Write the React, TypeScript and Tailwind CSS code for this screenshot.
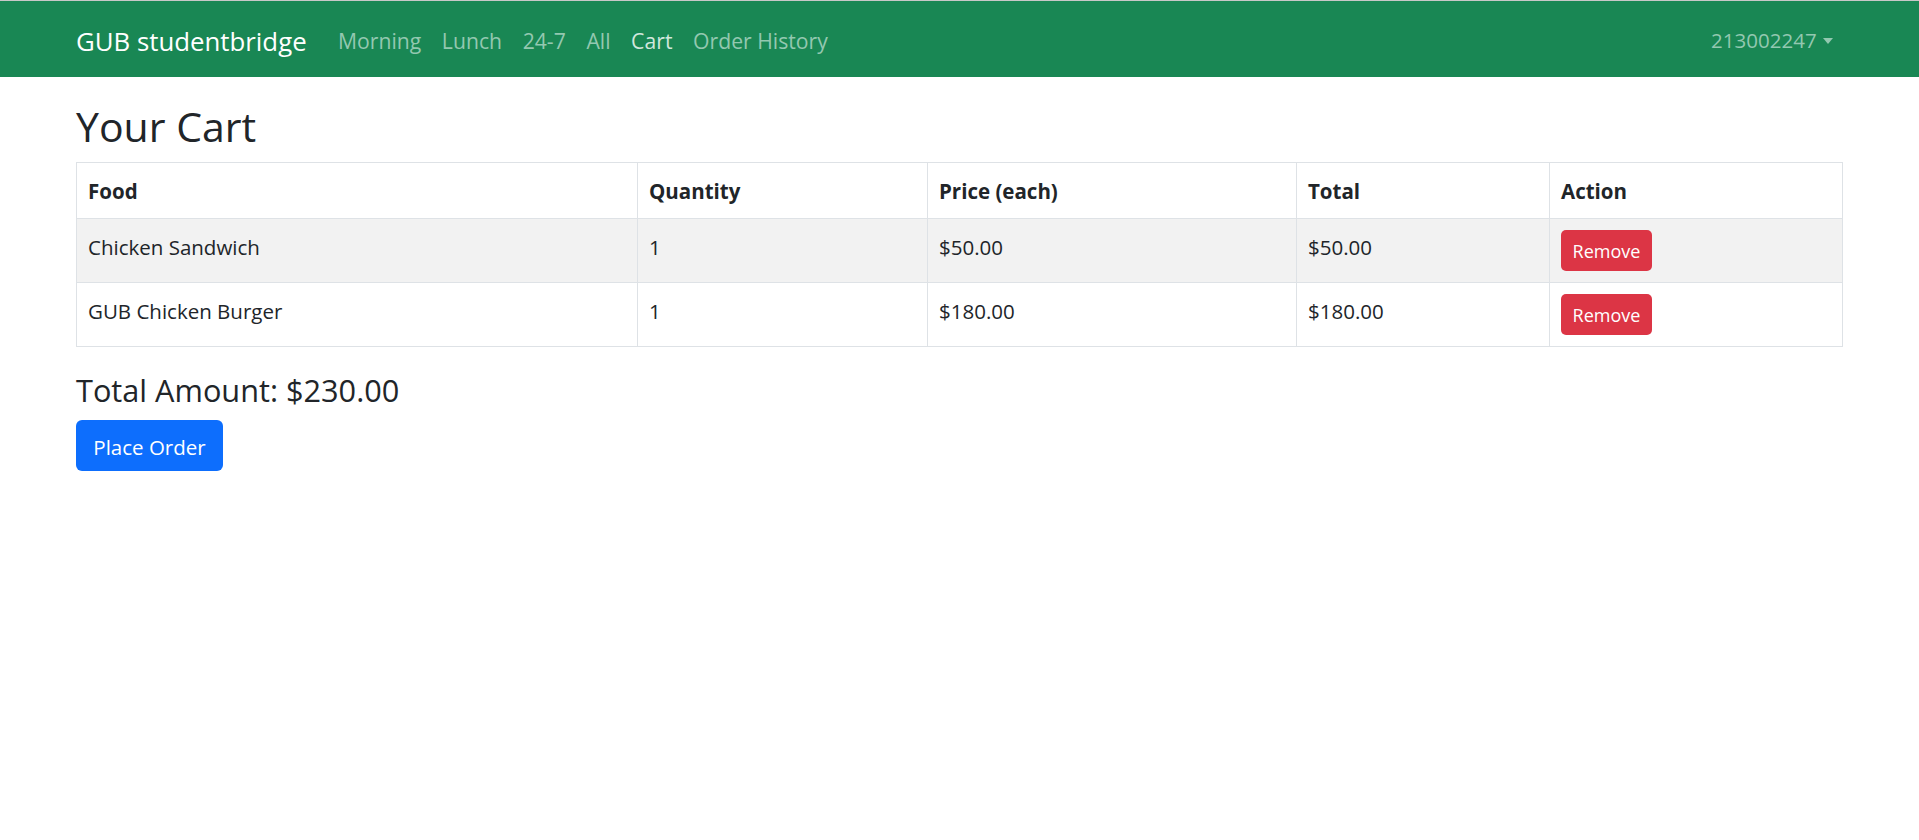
import React from "react";

const rows = [
  { food: "Chicken Sandwich", qty: 1, price: "$50.00", total: "$50.00" },
  { food: "GUB Chicken Burger", qty: 1, price: "$180.00", total: "$180.00" },
];

const links = ["Morning", "Lunch", "24-7", "All", "Cart", "Order History"];

export default function App() {
  return (
    <div
      className="min-h-screen bg-white text-[#212529]"
      style={{ fontFamily: '"Open Sans", "Noto Sans", sans-serif' }}
    >
      <nav className="border-t border-[#c8c8c8] bg-[#198754]">
        <div className="flex h-[76px] items-center px-[76px] pt-[3px]">
          <span className="mr-[21px] text-[25.8px] leading-[36px] text-white">GUB studentbridge</span>
          <ul className="flex items-center">
            {links.map((l) => (
              <li
                key={l}
                className={
                  "px-[10.3px] text-[21.2px] leading-[31px] " +
                  (l === "Cart" ? "text-[#d1e7dd]" : "text-[#93c8b0]")
                }
              >
                {l}
              </li>
            ))}
          </ul>
          <div className="ml-auto flex items-center px-[10.4px] text-[20.5px] leading-[31px] text-[#93c8b0]">
            <span>213002247</span>
            <span className="ml-[6px] inline-block h-0 w-0 border-x-[5.5px] border-t-[6px] border-x-transparent border-t-[#93c8b0]" />
          </div>
        </div>
      </nav>

      <main className="px-[76px]">
        <h2 className="mt-[25px] mb-[11px] text-[41px] leading-[49px] font-normal">Your Cart</h2>

        <table className="w-full border-collapse border border-[#dee2e6] text-[20.5px]">
          <thead>
            <tr>
              <th className="w-[561px] border border-[#dee2e6] px-[11px] pt-[13px] pb-[11px] text-left align-top font-bold leading-[31px]">Food</th>
              <th className="w-[290px] border border-[#dee2e6] px-[11px] pt-[13px] pb-[11px] text-left align-top font-bold leading-[31px]">Quantity</th>
              <th className="w-[369px] border border-[#dee2e6] px-[11px] pt-[13px] pb-[11px] text-left align-top font-bold leading-[31px]">Price (each)</th>
              <th className="w-[253px] border border-[#dee2e6] px-[11px] pt-[13px] pb-[11px] text-left align-top font-bold leading-[31px]">Total</th>
              <th className="border border-[#dee2e6] px-[11px] pt-[13px] pb-[11px] text-left align-top font-bold leading-[31px]">Action</th>
            </tr>
          </thead>
          <tbody>
            {rows.map((r, i) => (
              <tr key={r.food} className={i % 2 === 0 ? "bg-[#f2f2f2]" : "bg-white"}>
                <td className="border border-[#dee2e6] px-[11px] pt-[13px] pb-[11px] align-top leading-[31px]">{r.food}</td>
                <td className="border border-[#dee2e6] px-[11px] pt-[13px] pb-[11px] align-top leading-[31px]">{r.qty}</td>
                <td className="border border-[#dee2e6] px-[11px] pt-[13px] pb-[11px] align-top leading-[31px]">{r.price}</td>
                <td className="border border-[#dee2e6] px-[11px] pt-[13px] pb-[11px] align-top leading-[31px]">{r.total}</td>
                <td className="border border-[#dee2e6] px-[11px] pt-[11px] pb-[11px] align-top">
                  <button className="flex h-[41px] w-[91px] items-center justify-center rounded-[5px] bg-[#dc3545] pt-[2px] text-[18px] text-white">
                    Remove
                  </button>
                </td>
              </tr>
            ))}
          </tbody>
        </table>

        <h4 className="mt-[25px] mb-[11px] text-[30.7px] leading-[37px] font-normal">Total Amount: $230.00</h4>
        <button className="flex h-[51px] w-[147px] items-center justify-center rounded-[6px] bg-[#0d6efd] pt-[3px] text-[20.5px] text-white">
          Place Order
        </button>
      </main>
    </div>
  );
}
